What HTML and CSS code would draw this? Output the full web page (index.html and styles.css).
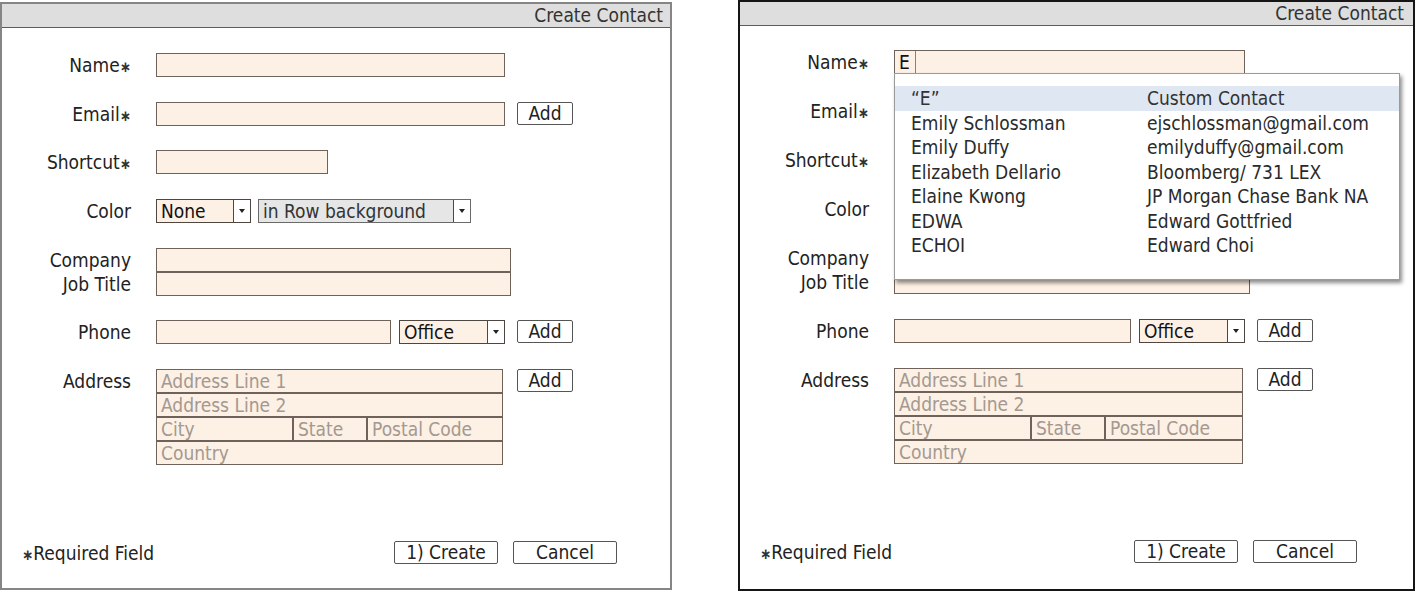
FILE: index.html
```html
<!DOCTYPE html>
<html lang="en">
<head>
<meta charset="utf-8">
<title>Create Contact</title>
<link rel="stylesheet" href="styles.css">
</head>
<body>

<!-- Dialog: empty form -->
<section class="window window--idle">
  <header class="titlebar">Create Contact</header>
  <div class="form">
    <div class="label">Name<span class="req">∗</span></div>
    <div class="field"><div class="input w-name"></div></div>

    <div class="label">Email<span class="req">∗</span></div>
    <div class="field"><div class="input w-name"></div><div class="btn btn--add">Add</div></div>

    <div class="label">Shortcut<span class="req">∗</span></div>
    <div class="field"><div class="input w-short"></div></div>

    <div class="label">Color</div>
    <div class="field field--tight">
      <div class="select w-none"><span class="select-text">None</span><span class="select-arrow"></span></div>
      <div class="select select--grey w-bg"><span class="select-text">in Row background</span><span class="select-arrow"></span></div>
    </div>

    <div class="label label--stack">Company<br>Job Title</div>
    <div class="field field--stack"><div class="input w-wide"></div><div class="input w-wide"></div></div>

    <div class="label">Phone</div>
    <div class="field">
      <div class="input w-phone"></div>
      <div class="select w-office"><span class="select-text select-text--dark">Office</span><span class="select-arrow"></span></div>
      <div class="btn btn--add">Add</div>
    </div>

    <div class="label">Address</div>
    <div class="field field--addr">
      <div class="address">
        <div class="input ph">Address Line 1</div>
        <div class="input ph">Address Line 2</div>
        <div class="addr-row">
          <div class="input ph w-city">City</div>
          <div class="input ph w-state">State</div>
          <div class="input ph w-postal">Postal Code</div>
        </div>
        <div class="input ph">Country</div>
      </div>
      <div class="btn btn--add">Add</div>
    </div>
  </div>
  <footer class="footer">
    <span class="note"><span class="req">∗</span>Required Field</span>
    <div class="actions">
      <div class="btn btn--wide">1) Create</div>
      <div class="btn btn--wide">Cancel</div>
    </div>
  </footer>
</section>

<!-- Dialog: typing a name, with suggestions open -->
<section class="window window--active">
  <header class="titlebar">Create Contact</header>
  <div class="form">
    <div class="label">Name<span class="req">∗</span></div>
    <div class="field">
      <div class="input w-name"><span class="typed">E</span></div>
      <div class="suggest">
        <div class="suggest-row is-current"><span>“E”</span><span>Custom Contact</span></div>
        <div class="suggest-row"><span>Emily Schlossman</span><span>ejschlossman@gmail.com</span></div>
        <div class="suggest-row"><span>Emily Duffy</span><span>emilyduffy@gmail.com</span></div>
        <div class="suggest-row"><span>Elizabeth Dellario</span><span>Bloomberg/ 731 LEX</span></div>
        <div class="suggest-row"><span>Elaine Kwong</span><span>JP Morgan Chase Bank NA</span></div>
        <div class="suggest-row"><span>EDWA</span><span>Edward Gottfried</span></div>
        <div class="suggest-row"><span>ECHOI</span><span>Edward Choi</span></div>
      </div>
    </div>

    <div class="label">Email<span class="req">∗</span></div>
    <div class="field"><div class="input w-name"></div><div class="btn btn--add">Add</div></div>

    <div class="label">Shortcut<span class="req">∗</span></div>
    <div class="field"><div class="input w-short"></div></div>

    <div class="label">Color</div>
    <div class="field field--tight">
      <div class="select w-none"><span class="select-text">None</span><span class="select-arrow"></span></div>
      <div class="select select--grey w-bg"><span class="select-text">in Row background</span><span class="select-arrow"></span></div>
    </div>

    <div class="label label--stack">Company<br>Job Title</div>
    <div class="field field--stack"><div class="input w-wide"></div><div class="input w-wide"></div></div>

    <div class="label">Phone</div>
    <div class="field">
      <div class="input w-phone"></div>
      <div class="select w-office"><span class="select-text select-text--dark">Office</span><span class="select-arrow"></span></div>
      <div class="btn btn--add">Add</div>
    </div>

    <div class="label">Address</div>
    <div class="field field--addr">
      <div class="address">
        <div class="input ph">Address Line 1</div>
        <div class="input ph">Address Line 2</div>
        <div class="addr-row">
          <div class="input ph w-city">City</div>
          <div class="input ph w-state">State</div>
          <div class="input ph w-postal">Postal Code</div>
        </div>
        <div class="input ph">Country</div>
      </div>
      <div class="btn btn--add">Add</div>
    </div>
  </div>
  <footer class="footer">
    <span class="note"><span class="req">∗</span>Required Field</span>
    <div class="actions">
      <div class="btn btn--wide">1) Create</div>
      <div class="btn btn--wide">Cancel</div>
    </div>
  </footer>
</section>

</body>
</html>
```

FILE: styles.css
```css
* { box-sizing: border-box; }

body {
  margin: 0;
  background: #ffffff;
  font-family: "DejaVu Sans Condensed", "DejaVu Sans", sans-serif;
  font-size: 19px;
  color: #222222;
  display: flex;
  align-items: flex-start;
  gap: 66px;
}

/* ---- dialog frame ---- */
.window {
  display: flex;
  flex-direction: column;
  background: #ffffff;
}
.window--idle {
  width: 672px;
  height: 588px;
  margin-top: 2px;
  border: 2px solid #858585;
}
.window--active {
  width: 677px;
  height: 591px;
  border: 2px solid #151515;
}

.titlebar {
  height: 24px;
  background: #dedede;
  border-bottom: 1px solid #5c5c5c;
  text-align: right;
  padding-right: 7px;
  line-height: 23px;
  color: #333333;
}
.window--active .titlebar { padding-right: 9px; }

/* ---- form grid: labels | fields ---- */
.form {
  display: grid;
  grid-template-columns: 129px auto;
  justify-content: start;
  align-items: start;
  column-gap: 25px;
  row-gap: 24.7px;
  padding-top: 25px;
}
.window--active .form { padding-top: 24px; row-gap: 25px; }

.label {
  text-align: right;
  line-height: 24px;
  color: #222222;
  white-space: nowrap;
}

.req {
  font-size: 15px;
  font-weight: bold;
  line-height: 0;
  color: #333333;
}

.field {
  display: flex;
  align-items: flex-start;
  gap: 12px;
  position: relative;
}
.field--tight { gap: 7px; }
.field--stack { flex-direction: column; gap: 0; }
.field--addr { gap: 14px; }

/* ---- text boxes ---- */
.input {
  height: 24px;
  background: #fdf0e5;
  border: 1px solid #6e625a;
  line-height: 22px;
  padding: 0 4px;
  white-space: nowrap;
  overflow: hidden;
}
.ph { color: #a39990; }

.w-name { width: 349px; }
.w-short { width: 172px; }
.w-wide { width: 355px; }
.w-phone { width: 235px; margin-right: -4px; }

.window--active .w-name { width: 351px; }
.window--active .w-wide { width: 356px; }
.window--active .w-phone { width: 237px; }

.address { width: 347px; display: flex; flex-direction: column; }
.window--active .address { width: 349px; }
.addr-row { display: flex; }
.w-city { width: 137px; }
.w-state { width: 74px; }
.w-postal { flex: 1; }

/* name box with typed text and caret edge */
.typed {
  display: inline-block;
  height: 22px;
  padding: 0 5px 0 4px;
  margin-left: -4px;
  border-right: 1px solid #8a8178;
  color: #111111;
}

/* ---- drop-down selects ---- */
.select {
  height: 24px;
  display: flex;
  background: #fdf0e5;
  border: 1px solid #4e4640;
}
.select--grey { background: #e6e6e6; border-color: #6a6a6a; }
.w-none { width: 95px; }
.w-bg { width: 213px; }
.w-office { width: 106px; }

.select-text {
  flex: 1;
  padding-left: 4px;
  line-height: 22px;
  color: #111111;
  white-space: nowrap;
}
.select--grey .select-text { color: #333333; }
.select-arrow {
  width: 17px;
  background: #ffffff;
  border-left: 1px solid #4e4640;
  display: flex;
  align-items: center;
  justify-content: center;
}
.select-arrow::before {
  content: "";
  border-left: 3px solid transparent;
  border-right: 3px solid transparent;
  border-top: 4px solid #222222;
}

/* ---- push buttons ---- */
.btn {
  height: 23px;
  background: #ffffff;
  border: 1px solid #555555;
  border-radius: 2px;
  text-align: center;
  line-height: 21px;
  color: #222222;
}
.btn--add { width: 56px; }
.btn--wide { width: 104px; }

/* ---- footer ---- */
.footer {
  margin-top: auto;
  display: flex;
  align-items: center;
  justify-content: space-between;
  padding: 0 53px 24px 20px;
}
.window--active .footer { padding: 0 56px 26px 20px; }
.note { color: #222222; }
.actions { display: flex; gap: 15px; }

/* ---- name suggestions popup ---- */
.suggest {
  position: absolute;
  left: 0;
  top: 23px;
  width: 506px;
  height: 207px;
  background: #ffffff;
  border: 1px solid #9a9a9a;
  box-shadow: 2px 3px 4px rgba(0, 0, 0, 0.45);
  padding-top: 12px;
  z-index: 2;
}
.suggest-row {
  display: grid;
  grid-template-columns: 236px 1fr;
  padding-left: 16px;
  height: 24.5px;
  line-height: 24.5px;
  color: #2a2a2a;
  white-space: nowrap;
}
.suggest-row.is-current { background: #dfe7f3; color: #333333; }
```
